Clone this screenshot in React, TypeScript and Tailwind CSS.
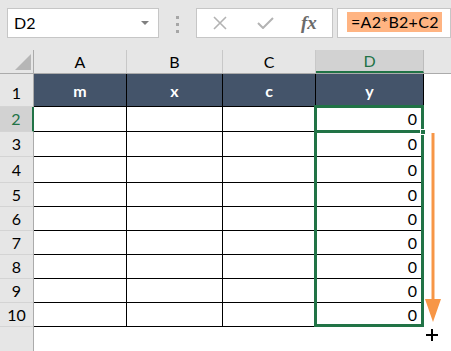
import React from 'react'

const cols = ['A', 'B', 'C', 'D']
const colWidths = ['w-[93px]', 'w-[96px]', 'w-[93px]', 'w-[108px]']
const heads = ['m', 'x', 'c', 'y']
const rowHeights = ['h-[25px]', 'h-[25px]', 'h-[26px]', 'h-[24px]', 'h-[24px]', 'h-[24px]', 'h-[24px]', 'h-[24px]', 'h-[24px]']

const App = () => {
  return (
    <div className="relative w-[451px] h-[351px] overflow-hidden bg-white text-black" style={{ fontFamily: 'Lato, "Liberation Sans", sans-serif' }}>
      {/* Formula bar */}
      <div className="flex items-start h-[50px] bg-[#e6e6e6] pt-2 pl-[7px]">
        <div className="flex items-center justify-between w-[152px] h-[30px] bg-white border border-[#c6c6c6] pl-[6px] pr-[9px]">
          <span className="text-[16px]">D2</span>
          <svg width="8" height="5" viewBox="0 0 8 5">
            <path d="M0 0 L8 0 L4 4 Z" fill="#808080" />
          </svg>
        </div>
        <div className="flex flex-col gap-[4px] mt-[8px] ml-[17px] mr-[17px]">
          <div className="w-[3px] h-[3px] bg-[#a6a6a6]" />
          <div className="w-[3px] h-[3px] bg-[#a6a6a6]" />
          <div className="w-[3px] h-[3px] bg-[#a6a6a6]" />
        </div>
        <div className="flex items-center w-[137px] h-[30px] bg-white border border-[#c6c6c6]">
          <svg width="14" height="14" viewBox="0 0 14 14" className="ml-[16px]">
            <path d="M1 1 L13 13 M13 1 L1 13" stroke="#b3b3b3" strokeWidth="1.6" />
          </svg>
          <svg width="17" height="12" viewBox="0 0 17 12" className="ml-[30px]">
            <path d="M1 6 L6 11 L16 1" stroke="#b3b3b3" strokeWidth="2" fill="none" />
          </svg>
          <span className="ml-[27px] text-[19px] italic font-bold text-[#6b6b6b]" style={{ fontFamily: '"Liberation Serif", serif' }}>
            fx
          </span>
        </div>
        <div className="flex-1 h-[30px] bg-white border border-[#c6c6c6] ml-[4px] pl-[9px] pt-[3px]">
          <div className="w-[95px] h-[20px] bg-[#ffb482] text-[16px] leading-[20px] pl-[4px] tracking-[0.3px]">=A2*B2+C2</div>
        </div>
      </div>

      {/* Column headers */}
      <div className="flex h-[24px] bg-[#e6e6e6] border-b border-[#ababab]">
        <div className="relative w-[34px] border-r border-[#ababab]">
          <svg width="16" height="16" viewBox="0 0 16 16" className="absolute right-[2px] bottom-[3px]">
            <path d="M16 0 L16 16 L0 16 Z" fill="#b6b6b6" />
          </svg>
        </div>
        {cols.map((c, i) => (
          <div
            key={c}
            className={`${colWidths[i]} flex items-center justify-center text-[16px] ${
              c === 'D' ? 'bg-[#d2d2d2] text-[#217346] border-b-2 border-[#217346] border-r border-r-[#bcbcbc]' : 'border-r border-[#c8c8c8]'
            }`}
          >
            {c}
          </div>
        ))}
      </div>

      {/* Body */}
      <div className="flex">
        <div className="w-[34px] bg-[#e6e6e6] border-r border-[#ababab] h-[278px]">
          <div className="h-[33px] flex items-end justify-center pb-[1px] text-[16px] border-b border-[#d4d4d4]">1</div>
          {rowHeights.map((h, i) => (
            <div
              key={i}
              className={`${h} flex items-center justify-center text-[16px] border-b border-[#d4d4d4] ${
                i === 0 ? 'bg-[#d2d2d2] text-[#217346] border-r-2 border-r-[#217346] -mr-px' : ''
              }`}
            >
              {i + 2}
            </div>
          ))}
        </div>
        <div className="flex flex-col">
          <div className="flex h-[33px]">
            {heads.map((t, i) => (
              <div
                key={t}
                className={`${colWidths[i]} bg-[#44546a] text-white font-bold text-[16px] flex justify-center pt-[5px] border-r border-b border-black`}
              >
                {t}
              </div>
            ))}
          </div>
          {rowHeights.map((h, r) => (
            <div key={r} className={`flex ${h}`}>
              {cols.map((c, i) => (
                <div
                  key={c}
                  className={`${colWidths[i]} border-r border-b border-black flex items-center justify-end pr-[6px] text-[16px]`}
                >
                  {c === 'D' ? '0' : ''}
                </div>
              ))}
            </div>
          ))}
        </div>
      </div>

      {/* Selection overlay */}
      <div className="absolute left-[314px] top-[105px] w-[110px] h-[222px] border-[3px] border-[#217346]" />
      <div className="absolute left-[314px] top-[130px] w-[110px] h-[3px] bg-[#217346]" />
      <div className="absolute left-[420px] top-[129px] w-[6px] h-[6px] bg-[#217346] border border-white" />

      {/* Fill arrow */}
      <svg width="20" height="192" viewBox="0 0 20 192" className="absolute left-[423px] top-[133px]">
        <path d="M10 0 L10 168" stroke="#f79646" strokeWidth="3" />
        <path d="M2 166 L18 166 L10 189 Z" fill="#f79646" />
      </svg>
      <svg width="12" height="12" viewBox="0 0 12 12" className="absolute left-[426px] top-[329px]">
        <path d="M6 0 L6 12 M0 6 L12 6" stroke="#000" strokeWidth="2" />
      </svg>
    </div>
  )
}

export default App
